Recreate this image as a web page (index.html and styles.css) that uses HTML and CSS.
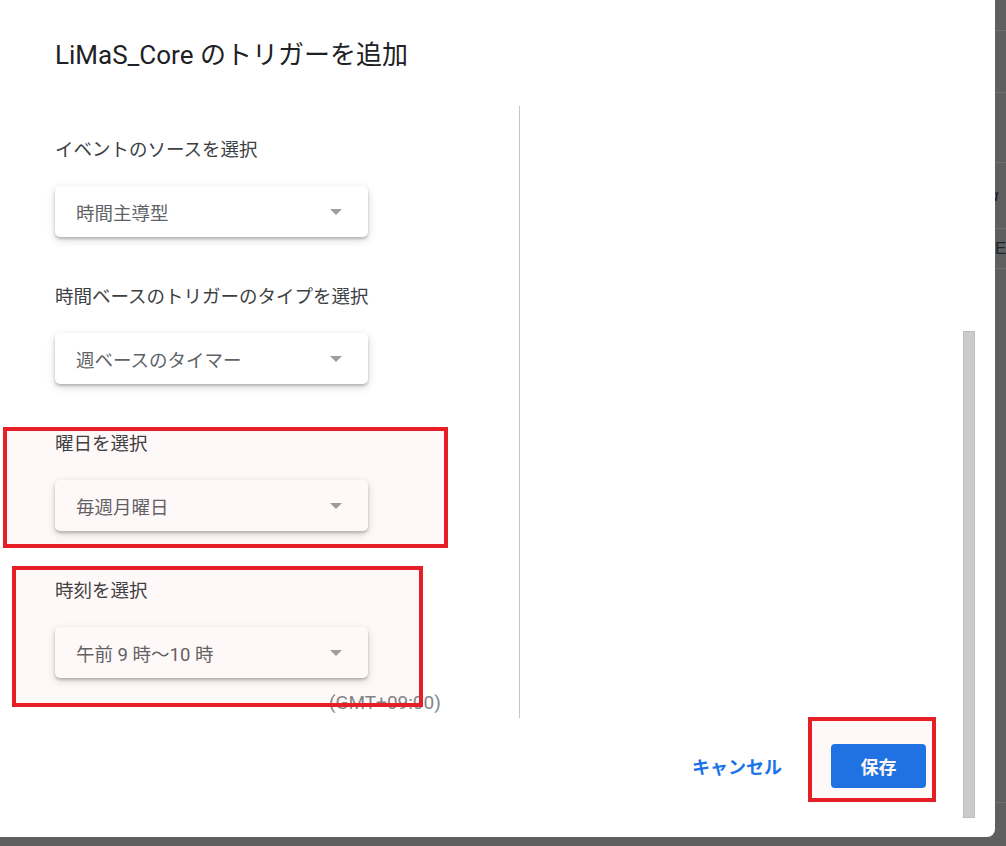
FILE: index.html
```html
<!DOCTYPE html>
<html lang="ja">
<head>
    <meta charset="UTF-8">
    <title>トリガーを追加</title>
    <link rel="stylesheet" href="styles.css">
</head>
<body>
<div class="screen">
    <div class="dialog">
        <div class="main">
            <h1 class="title">LiMaS_Core のトリガーを追加</h1>

            <div class="content">
                <div class="form">
                    <!-- event source -->
                    <div class="field">
                        <div class="label">イベントのソースを選択</div>
                        <div class="select"><span>時間主導型</span><i class="caret"></i></div>
                    </div>

                    <!-- timer type -->
                    <div class="field">
                        <div class="label">時間ベースのトリガーのタイプを選択</div>
                        <div class="select"><span>週ベースのタイマー</span><i class="caret"></i></div>
                    </div>

                    <!-- weekday -->
                    <div class="field">
                        <div class="label">曜日を選択</div>
                        <div class="select"><span>毎週月曜日</span><i class="caret"></i></div>
                    </div>

                    <!-- time of day -->
                    <div class="field">
                        <div class="label">時刻を選択</div>
                        <div class="select"><span>午前 9 時〜10 時</span><i class="caret"></i></div>
                    </div>
                    <div class="tz">(GMT+09:00)</div>
                </div>
                <div class="side"></div>
            </div>

            <div class="actions">
                <button class="btn-text">キャンセル</button>
                <button class="btn-primary">保存</button>
            </div>
        </div>

        <div class="scrollbar"><div class="thumb"></div></div>

        <!-- red annotation boxes -->
        <div class="mark mark-day"></div>
        <div class="mark mark-time"></div>
        <div class="mark mark-save"></div>
    </div>

    <div class="backdrop">
        <div class="row row-1"></div>
        <div class="row row-2"></div>
        <div class="row row-3"></div>
        <div class="row row-4"><span class="peek peek-a">ɑ</span></div>
        <div class="row row-5"><span class="peek">Ec</span></div>
        <div class="row row-6"></div>
    </div>
</div>
</body>
</html>
```

FILE: styles.css
```css
html, body {
    margin: 0;
    padding: 0;
    background-color: #5f5f5f;
}
.screen {
    display: flex;
    flex-direction: row;
    width: 1006px;
    height: 846px;
    overflow: hidden;
    font-family: Roboto, "Noto Sans CJK JP", sans-serif;
}
.dialog {
    position: relative;
    display: flex;
    flex-direction: row;
    width: 995px;
    height: 837px;
    flex-shrink: 0;
    background: #fff;
    border-bottom-right-radius: 8px;
}
.main {
    width: 963px;
    display: flex;
    flex-direction: column;
}
.title {
    margin: 0;
    padding: 40px 0 0 55px;
    font-size: 26px;
    line-height: 30px;
    font-weight: 400;
    color: #202124;
}
.content {
    display: flex;
    flex-direction: row;
    margin-top: 36px;
    height: 612px;
}
.form {
    width: 520px;
    box-sizing: border-box;
    border-right: 1px solid #c4c4c4;
    padding: 32px 0 0 55px;
}
.field + .field {
    margin-top: 48px;
}
.label {
    font-size: 18.5px;
    line-height: 24px;
    color: #3c4043;
}
.select {
    margin-top: 24px;
    width: 313px;
    height: 51px;
    box-sizing: border-box;
    display: flex;
    align-items: center;
    justify-content: space-between;
    padding: 0 26px 0 21px;
    border-radius: 5px;
    background: #fff;
    box-shadow: 0 2px 3px rgba(0,0,0,.22), 0 3px 10px rgba(0,0,0,.14);
}
.select span {
    font-size: 18.5px;
    color: #5f6368;
}
.caret {
    width: 0;
    height: 0;
    border-left: 6.5px solid transparent;
    border-right: 6.5px solid transparent;
    border-top: 6px solid #9e9e9e;
}
.tz {
    margin: 13px 0 0 274px;
    font-size: 19px;
    line-height: 24px;
    color: #80868b;
}
.side {
    flex: 1;
}
.actions {
    display: flex;
    justify-content: flex-end;
    align-items: center;
    gap: 25px;
    padding: 26px 37px 0 0;
}
.btn-text {
    height: 44px;
    padding: 0 24px;
    border: 0;
    background: none;
    font-family: Roboto, "Noto Sans CJK JP", sans-serif;
    font-size: 18px;
    font-weight: 700;
    color: #1a73e8;
}
.btn-primary {
    width: 95px;
    height: 44px;
    border: 0;
    border-radius: 4px;
    background: #1a73e8;
    color: #fff;
    font-family: Roboto, "Noto Sans CJK JP", sans-serif;
    font-size: 18px;
    font-weight: 700;
}
.scrollbar {
    width: 12px;
    margin-right: 20px;
}
.thumb {
    margin-top: 331px;
    height: 487px;
    box-sizing: border-box;
    background: #cbcbcb;
    border: 1px solid #bdbdbd;
}

/* annotations drawn over the dialog */
.mark {
    position: absolute;
    box-sizing: border-box;
    border: 4px solid #e61e25;
    background: rgba(235, 60, 40, .03);
    pointer-events: none;
}
.mark-day {
    left: 3px;
    top: 427px;
    width: 445px;
    height: 121px;
}
.mark-time {
    left: 12px;
    top: 566px;
    width: 411px;
    height: 141px;
}
.mark-save {
    left: 808px;
    top: 717px;
    width: 128px;
    height: 85px;
}

/* page behind the dialog */
.backdrop {
    flex: 1;
    overflow: hidden;
}
.row {
    box-sizing: border-box;
    border-bottom: 1px solid #707070;
    display: flex;
    align-items: center;
    white-space: nowrap;
}
.row-1 { height: 31px; }
.row-2 { height: 62px; }
.row-3 { height: 70px; }
.row-4 { height: 66px; }
.row-5 { height: 40px; }
.row-6 { height: 534px; }
.peek {
    font-family: "Liberation Sans", sans-serif;
    font-size: 17px;
    color: #1d2433;
}
.peek-a {
    margin-left: -6px;
    font-style: italic;
}
```
